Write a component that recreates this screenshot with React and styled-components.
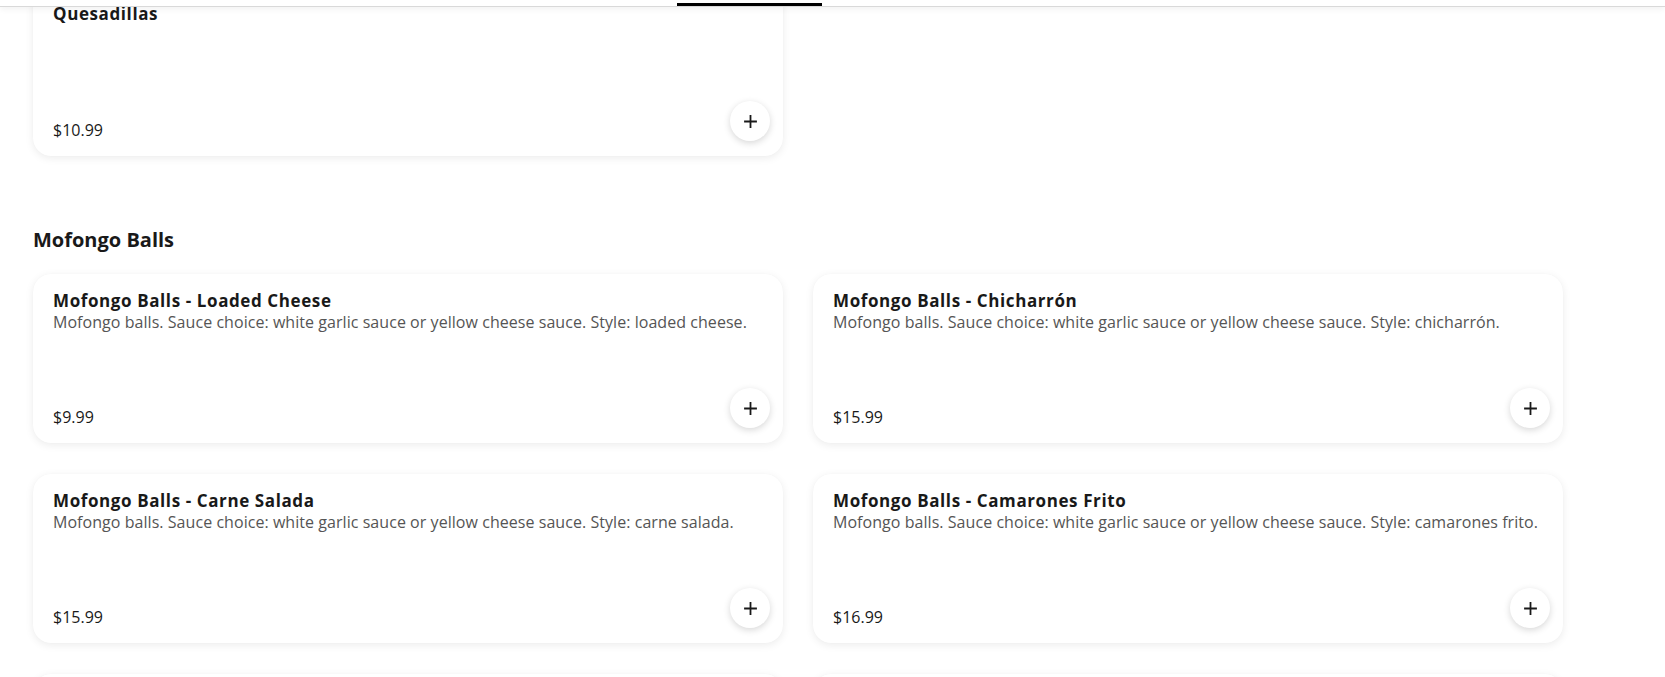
import React from "react";
import styled, { createGlobalStyle } from "styled-components";

const Global = createGlobalStyle`
  html, body { margin: 0; padding: 0; background: #ffffff; overflow: hidden; }
  body { font-family: "Open Sans", Lato, "Noto Sans", sans-serif; color: #191919; }
`;

const Header = styled.header`
  position: fixed;
  top: 0;
  left: 0;
  right: 0;
  height: 6px;
  background: #ffffff;
  border-bottom: 1px solid #d9d9d9;
  box-shadow: 0 2px 6px rgba(0, 0, 0, 0.06);
  z-index: 10;
`;

const TabUnderline = styled.div`
  position: absolute;
  left: ${(p) => p.$left}px;
  bottom: 0;
  width: ${(p) => p.$width}px;
  height: 3px;
  background: #000000;
`;

const Page = styled.main`
  padding: 0 33px;
  margin-top: -13px;
`;

const Section = styled.section`
  margin-bottom: ${(p) => p.$gapAfter || 0}px;
`;

const SectionTitle = styled.h2`
  margin: 0 0 22px;
  font-size: 20px;
  line-height: 24px;
  font-weight: 700;
  color: #191919;
`;

const Grid = styled.div`
  display: grid;
  grid-template-columns: 750px 750px;
  column-gap: 30px;
  row-gap: 31px;
`;

const Card = styled.article`
  height: 169px;
  box-sizing: border-box;
  background: #ffffff;
  border-radius: 18px;
  box-shadow: 0 2px 9px rgba(0, 0, 0, 0.08), 0 0 1px rgba(0, 0, 0, 0.04);
  padding: 17px 13px 15px 20px;
  display: flex;
  flex-direction: column;
`;

const ItemName = styled.h3`
  margin: 0;
  font-size: 17px;
  line-height: 20px;
  font-weight: 700;
  letter-spacing: 0.6px;
  color: #191919;
`;

const ItemDesc = styled.p`
  margin: 0;
  font-size: 16px;
  line-height: 22px;
  letter-spacing: 0.05px;
  color: #555555;
`;

const Footer = styled.div`
  margin-top: auto;
  display: flex;
  justify-content: space-between;
  align-items: flex-end;
`;

const Price = styled.span`
  font-size: 16px;
  line-height: 20px;
  color: #191919;
  padding-bottom: 1px;
`;

const AddButton = styled.button`
  width: 40px;
  height: 40px;
  border-radius: 50%;
  border: none;
  background: #ffffff;
  box-shadow: 0 2px 7px rgba(0, 0, 0, 0.16);
  display: flex;
  align-items: center;
  justify-content: center;
  padding: 0;
  cursor: pointer;
`;

const PlusIcon = () => (
  <svg width="13" height="13" viewBox="0 0 13 13" aria-hidden="true">
    <path d="M6.5 1v11M1 6.5h11" stroke="#191919" strokeWidth="1.8" strokeLinecap="square" />
  </svg>
);

const MenuCard = ({ name, desc, price }) => (
  <Card>
    <ItemName>{name}</ItemName>
    {desc && <ItemDesc>{desc}</ItemDesc>}
    <Footer>
      <Price>{price}</Price>
      <AddButton aria-label={`Add ${name}`}>
        <PlusIcon />
      </AddButton>
    </Footer>
  </Card>
);

const base = "Mofongo balls. Sauce choice: white garlic sauce or yellow cheese sauce. Style: ";

const mofongo = [
  { name: "Mofongo Balls - Loaded Cheese", desc: base + "loaded cheese.", price: "$9.99" },
  { name: "Mofongo Balls - Chicharrón", desc: base + "chicharrón.", price: "$15.99" },
  { name: "Mofongo Balls - Carne Salada", desc: base + "carne salada.", price: "$15.99" },
  { name: "Mofongo Balls - Camarones Frito", desc: base + "camarones frito.", price: "$16.99" },
  { name: "Mofongo Balls - Pollo", desc: base + "pollo.", price: "$14.99" },
  { name: "Mofongo Balls - Pernil", desc: base + "pernil.", price: "$14.99" },
];

export default function App() {
  return (
    <>
      <Global />
      <Header>
        <TabUnderline $left={677} $width={145} />
      </Header>
      <Page>
        <Section $gapAfter={72}>
          <Grid>
            <MenuCard name="Quesadillas" price="$10.99" />
          </Grid>
        </Section>
        <Section>
          <SectionTitle>Mofongo Balls</SectionTitle>
          <Grid>
            {mofongo.map((m) => (
              <MenuCard key={m.name} {...m} />
            ))}
          </Grid>
        </Section>
      </Page>
    </>
  );
}
